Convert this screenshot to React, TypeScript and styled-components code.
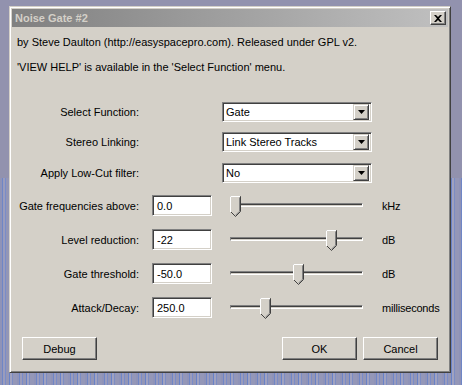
import styled, { createGlobalStyle } from "styled-components"

const GlobalStyle = createGlobalStyle`
  html, body {
    margin: 0;
    padding: 0;
  }
  body {
    width: 462px;
    height: 385px;
    overflow: hidden;
    background:
      repeating-linear-gradient(90deg,
        #8f93b8 0 2px, #6f86c6 2px 3px, #9a9cbc 3px 5px, #7a8cc8 5px 6px,
        #9396b6 6px 9px, #6882c8 9px 10px, #a0a2c0 10px 12px, #7c8dc4 12px 13px,
        #9497b8 13px 17px) 0 178px / 100% 100% no-repeat,
      #9292ae;
    font-family: "Liberation Sans", Arial, sans-serif;
    font-size: 11px;
    color: #000;
  }
`

const Window = styled.div`
  box-sizing: border-box;
  margin: 6px 0 0 9px;
  width: 442px;
  height: 367px;
  padding: 2px;
  background: #d4d0c8;
  border: 1px solid;
  border-color: #d4d0c8 #404040 #404040 #d4d0c8;
  box-shadow: inset 1px 1px #fff, inset -1px -1px #808080;
  display: flex;
  flex-direction: column;
`

const TitleBar = styled.div`
  height: 18px;
  display: flex;
  align-items: center;
  justify-content: space-between;
  padding: 0 2px 0 3px;
  background: linear-gradient(90deg, #808080, #c0c0c0);
`

const Title = styled.span`
  font-weight: bold;
  color: #d4d0c8;
  font-size: 11px;
`

const CloseBtn = styled.div`
  box-sizing: border-box;
  width: 16px;
  height: 14px;
  display: flex;
  align-items: center;
  justify-content: center;
  background: #d4d0c8;
  border: 1px solid;
  border-color: #fff #404040 #404040 #fff;
  box-shadow: inset -1px -1px #808080;
`

const Body = styled.div`
  flex: 1;
  display: flex;
  flex-direction: column;
`

const Intro = styled.p<{ $top: number }>`
  margin: ${(p) => p.$top}px 0 0 5px;
  line-height: 13px;
`

const Row = styled.div<{ $top: number }>`
  display: flex;
  align-items: center;
  margin-top: ${(p) => p.$top}px;
`

const Label = styled.label`
  width: 127px;
  text-align: right;
  white-space: nowrap;
`

const sunken = `
  box-sizing: border-box;
  background: #fff;
  border: 1px solid;
  border-color: #808080 #fff #fff #808080;
  box-shadow: inset 1px 1px #404040, inset -1px -1px #d4d0c8;
`

const Select = styled.div`
  ${sunken}
  margin-left: 83px;
  width: 150px;
  height: 20px;
  padding: 2px;
  display: flex;
  align-items: center;
  justify-content: space-between;
`

const SelectText = styled.span`
  padding-left: 1px;
`

const ArrowBtn = styled.div`
  box-sizing: border-box;
  width: 16px;
  height: 16px;
  display: flex;
  align-items: center;
  justify-content: center;
  background: #d4d0c8;
  border: 1px solid;
  border-color: #d4d0c8 #404040 #404040 #d4d0c8;
  box-shadow: inset 1px 1px #fff, inset -1px -1px #808080;
`

const Field = styled.div`
  ${sunken}
  margin-left: 13px;
  width: 60px;
  height: 21px;
  padding: 0 4px;
  display: flex;
  align-items: center;
`

const Slider = styled.div`
  position: relative;
  margin-left: 18px;
  width: 133px;
  height: 21px;
`

const Track = styled.div`
  box-sizing: border-box;
  margin-top: 8px;
  height: 4px;
  border: 1px solid;
  border-color: #808080 #fff #fff #808080;
  background: #404040;
  box-shadow: inset 0 -1px #d4d0c8;
`

const Thumb = styled.svg`
  position: absolute;
  top: 1px;
  display: block;
`

const Unit = styled.span`
  margin-left: 19px;
  letter-spacing: -0.2px;
`

const ButtonBar = styled.div`
  margin-top: auto;
  margin-bottom: 10px;
  padding: 0 10px;
  display: flex;
  gap: 6px;
`

const Button = styled.button`
  box-sizing: border-box;
  width: 75px;
  height: 23px;
  padding: 0;
  font: inherit;
  color: #000;
  background: #d4d0c8;
  border: 1px solid;
  border-color: #fff #404040 #404040 #fff;
  box-shadow: inset -1px -1px #808080;
  &:first-child {
    margin-right: auto;
  }
`

function DropArrow() {
  return (
    <svg width="7" height="4" viewBox="0 0 7 4">
      <path d="M0 0H7L3.5 4Z" fill="#000" />
    </svg>
  )
}

function SliderThumb({ pos }: { pos: number }) {
  return (
    <Thumb width="11" height="21" viewBox="0 0 11 21" style={{ left: Math.round(pos * 122) }}>
      <polygon points="0.5,0.5 10.5,0.5 10.5,15.5 5.5,20.5 0.5,15.5" fill="#d4d0c8" stroke="#404040" />
      <polyline points="0.5,16 0.5,0.5 10,0.5" fill="none" stroke="#fff" />
      <polyline points="9.5,1.5 9.5,15.2 5.5,19.2" fill="none" stroke="#808080" />
    </Thumb>
  )
}

const selects = [
  { label: "Select Function:", value: "Gate", top: 28 },
  { label: "Stereo Linking:", value: "Link Stereo Tracks", top: 10 },
  { label: "Apply Low-Cut filter:", value: "No", top: 11 },
]

const sliders = [
  { label: "Gate frequencies above:", value: "0.0", unit: "kHz", pos: 0, top: 12 },
  { label: "Level reduction:", value: "-22", unit: "dB", pos: 0.787, top: 13 },
  { label: "Gate threshold:", value: "-50.0", unit: "dB", pos: 0.516, top: 13 },
  { label: "Attack/Decay:", value: "250.0", unit: "milliseconds", pos: 0.246, top: 13 },
]

export default function App() {
  return (
    <>
      <GlobalStyle />
      <Window>
        <TitleBar>
          <Title>Noise Gate #2</Title>
          <CloseBtn>
            <svg width="8" height="7" viewBox="0 0 8 7">
              <path d="M0 0h2l2 2 2-2h2L5 3.5 8 7H6L4 5 2 7H0l3-3.5Z" fill="#000" />
            </svg>
          </CloseBtn>
        </TitleBar>
        <Body>
          <Intro $top={9}>by Steve Daulton (http://easyspacepro.com). Released under GPL v2.</Intro>
          <Intro $top={12}>'VIEW HELP' is available in the 'Select Function' menu.</Intro>

          {selects.map((s) => (
            <Row key={s.label} $top={s.top}>
              <Label>{s.label}</Label>
              <Select>
                <SelectText>{s.value}</SelectText>
                <ArrowBtn>
                  <DropArrow />
                </ArrowBtn>
              </Select>
            </Row>
          ))}

          {sliders.map((s) => (
            <Row key={s.label} $top={s.top}>
              <Label>{s.label}</Label>
              <Field>{s.value}</Field>
              <Slider>
                <Track />
                <SliderThumb pos={s.pos} />
              </Slider>
              <Unit>{s.unit}</Unit>
            </Row>
          ))}

          <ButtonBar>
            <Button>Debug</Button>
            <Button>OK</Button>
            <Button>Cancel</Button>
          </ButtonBar>
        </Body>
      </Window>
    </>
  )
}
